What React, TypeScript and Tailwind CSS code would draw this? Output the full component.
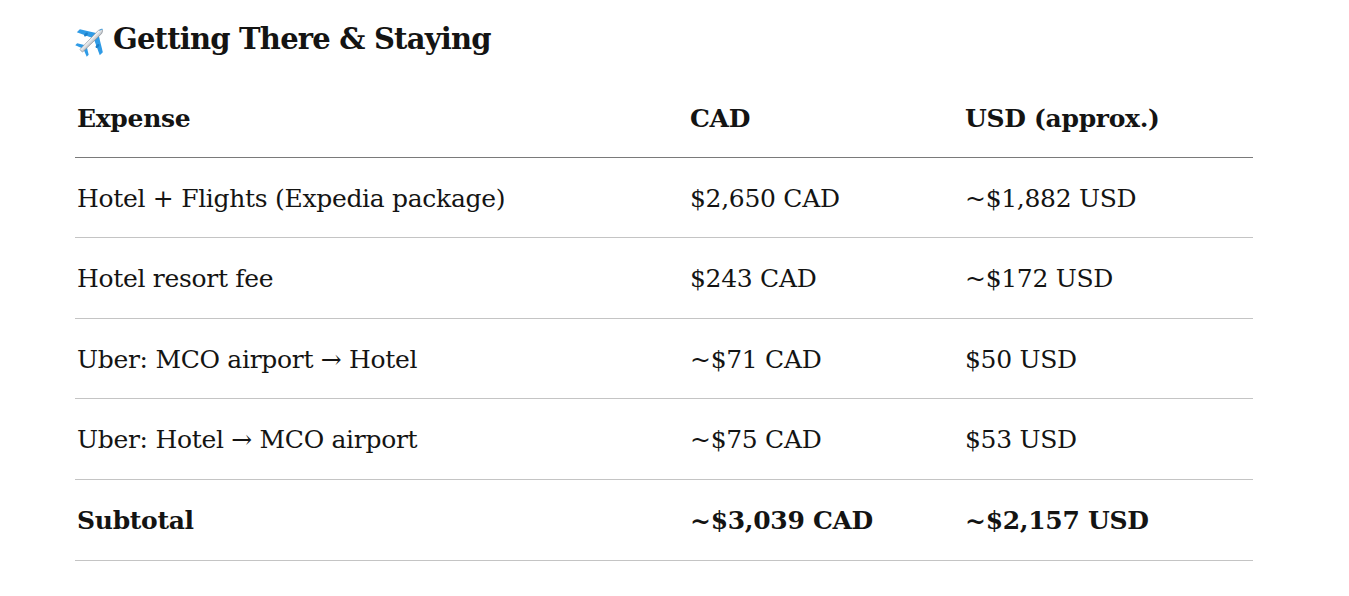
import React from "react"

const rows = [
  { expense: "Hotel + Flights (Expedia package)", cad: "$2,650 CAD", usd: "~$1,882 USD" },
  { expense: "Hotel resort fee", cad: "$243 CAD", usd: "~$172 USD" },
  { expense: "Uber: MCO airport → Hotel", cad: "~$71 CAD", usd: "$50 USD" },
  { expense: "Uber: Hotel → MCO airport", cad: "~$75 CAD", usd: "$53 USD" },
]

function Airplane() {
  return (
    <svg width="39" height="39" viewBox="0 0 36 36" className="shrink-0">
      <defs>
        <linearGradient id="body" x1="0" y1="0" x2="0" y2="1">
          <stop offset="0" stopColor="#ffffff" />
          <stop offset="1" stopColor="#b9bec4" />
        </linearGradient>
      </defs>
      <g transform="rotate(-45 18 18)">
        <polygon points="19,17 12.5,3 16.5,3 25,17" fill="#2f9be6" />
        <polygon points="19,19 12.5,33 16.5,33 25,19" fill="#2f9be6" />
        <polygon points="5.5,17 3,10.5 5.5,10.5 9.5,17" fill="#2f9be6" />
        <polygon points="5.5,19 3,25.5 5.5,25.5 9.5,19" fill="#2f9be6" />
        <ellipse cx="17" cy="10.5" rx="2.2" ry="1.2" fill="#1d7fc7" />
        <ellipse cx="17" cy="25.5" rx="2.2" ry="1.2" fill="#1d7fc7" />
        <path d="M3.5 16.3 L28 15.9 Q33.5 18 28 20.1 L3.5 19.7 Q2.6 18 3.5 16.3Z" fill="url(#body)" stroke="#8c9299" strokeWidth="0.6" />
        <path d="M28.5 16.6 Q31 17 31.3 18" stroke="#2f9be6" strokeWidth="0.8" fill="none" />
      </g>
    </svg>
  )
}

export default function App() {
  return (
    <div className="min-h-screen bg-white text-[#141413] pl-[73px] pt-[19px]" style={{ fontFamily: '"DejaVu Serif", "Liberation Serif", serif' }}>
      <h2 className="flex items-center gap-[1px] h-[40px] text-[29px] font-bold leading-[40px] tracking-[-0.8px]">
        <Airplane />
        <span>Getting There &amp; Staying</span>
      </h2>
      <table className="ml-[2px] mt-[18px] w-[1178px] border-collapse text-[25px] leading-[39.6px] tracking-[-0.3px]">
        <thead>
          <tr className="border-b border-[#7a7a7a]">
            <th className="w-[613px] pl-[2px] pt-[22px] pb-[18px] text-left font-bold">Expense</th>
            <th className="w-[275px] pl-[2px] pt-[22px] pb-[18px] text-left font-bold">CAD</th>
            <th className="pl-[2px] pt-[22px] pb-[18px] text-left font-bold">USD (approx.)</th>
          </tr>
        </thead>
        <tbody>
          {rows.map((r) => (
            <tr key={r.expense} className="border-b border-[#c4c4c4]">
              <td className="pl-[2px] pt-[21px] pb-[19px]">{r.expense}</td>
              <td className="pl-[2px] pt-[21px] pb-[19px]">{r.cad}</td>
              <td className="pl-[2px] pt-[21px] pb-[19px]">{r.usd}</td>
            </tr>
          ))}
          <tr className="border-b border-[#c4c4c4]">
            <td className="pl-[2px] pt-[21px] pb-[19px] font-bold">Subtotal</td>
            <td className="pl-[2px] pt-[21px] pb-[19px] font-bold">~$3,039 CAD</td>
            <td className="pl-[2px] pt-[21px] pb-[19px] font-bold">~$2,157 USD</td>
          </tr>
        </tbody>
      </table>
    </div>
  )
}
